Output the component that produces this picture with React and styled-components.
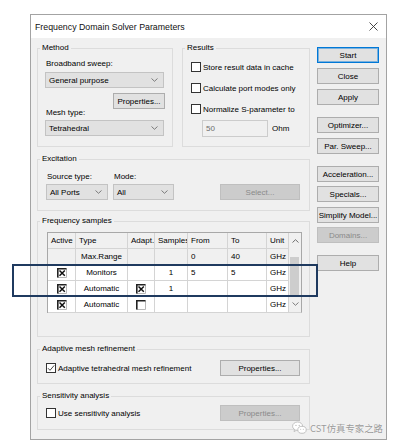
import React from "react";
import styled, { createGlobalStyle } from "styled-components";

const GlobalStyle = createGlobalStyle`
  html, body {
    margin: 0;
    padding: 0;
    background: #ffffff;
  }
  body {
    font-family: "Liberation Sans", Arial, sans-serif;
    font-size: 8px;
    color: #000;
  }
  * { box-sizing: border-box; }
`;

const Chevron = () => (
  <svg width="7" height="4" viewBox="0 0 7 4">
    <polyline points="0.5,0.5 3.5,3.3 6.5,0.5" fill="none" stroke="#707070" strokeWidth="0.9" />
  </svg>
);

const XBox = ({ checked }) => (
  <svg width="10" height="10" viewBox="0 0 10 10">
    <path d="M9.5 0.5 V9.5 H0.5" fill="none" stroke="#b8b8b8" strokeWidth="1" />
    <path d="M0.8 9.5 V0.8 H9.5" fill="none" stroke="#222" strokeWidth="1.6" />
    {checked && (
      <path d="M2.5 2.5 L7.8 7.8 M7.8 2.5 L2.5 7.8" stroke="#111" strokeWidth="1.5" />
    )}
  </svg>
);

const Tick = () => (
  <svg width="8" height="8" viewBox="0 0 8 8">
    <polyline points="1,4.2 3,6.3 7.2,1.4" fill="none" stroke="#333" strokeWidth="0.9" />
  </svg>
);

const WeChat = () => (
  <svg width="15" height="14" viewBox="0 0 15 14">
    <ellipse cx="5.6" cy="5.2" rx="5" ry="4.2" fill="#fff" stroke="#b5b5b5" strokeWidth="0.8" />
    <path d="M2.6 8.4 L2 10.6 L4.6 9.2" fill="#fff" stroke="#b5b5b5" strokeWidth="0.8" />
    <ellipse cx="10" cy="8.8" rx="4.2" ry="3.5" fill="#fff" stroke="#b5b5b5" strokeWidth="0.8" />
    <circle cx="4" cy="4.4" r="0.6" fill="#b5b5b5" />
    <circle cx="7.2" cy="4.4" r="0.6" fill="#b5b5b5" />
    <circle cx="8.7" cy="8.3" r="0.5" fill="#b5b5b5" />
    <circle cx="11.3" cy="8.3" r="0.5" fill="#b5b5b5" />
  </svg>
);

const columns = [28, 52, 27, 33, 40, 39, 22];

const rows = [
  { head: true, cells: ["Active", "Type", "Adapt.", "Samples", "From", "To", "Unit"] },
  { grey: true, cells: ["", "Max.Range", "", "", "0", "40", "GHz"] },
  { cells: [<XBox checked />, "Monitors", "", "1", "5", "5", "GHz"] },
  { cells: [<XBox checked />, "Automatic", <XBox checked />, "1", "", "", "GHz"] },
  { cells: [<XBox checked />, "Automatic", <XBox />, "", "", "", "GHz"] },
];

const centered = [true, true, true, true, false, false, false];

const App = () => {
  return (
    <Page>
      <GlobalStyle />
      <Dialog>
        <TitleBar>
          <Title>Frequency Domain Solver Parameters</Title>
          <CloseX>
            <svg width="9" height="9" viewBox="0 0 9 9">
              <path d="M0.5 0.5 L8.5 8.5 M8.5 0.5 L0.5 8.5" stroke="#333" strokeWidth="0.9" />
            </svg>
          </CloseX>
        </TitleBar>
        <Body>
          <LeftCol>
            <TopRow>
              <Group $w={136} $h={104}>
                <Legend>Method</Legend>
                <Stack>
                  <Caption $mt={6}>Broadband sweep:</Caption>
                  <Dropdown $w={119} $mt={3}>
                    General purpose <Chevron />
                  </Dropdown>
                  <Button $w={52} $mt={5} $right>Properties...</Button>
                  <Caption $mt={-1}>Mesh type:</Caption>
                  <Dropdown $w={119} $mt={2}>
                    Tetrahedral <Chevron />
                  </Dropdown>
                </Stack>
              </Group>
              <Group $w={128} $h={104}>
                <Legend>Results</Legend>
                <Stack>
                  <CheckRow $mt={8}>
                    <CheckBox />
                    Store result data in cache
                  </CheckRow>
                  <CheckRow $mt={9}>
                    <CheckBox />
                    Calculate port modes only
                  </CheckRow>
                  <CheckRow $mt={9}>
                    <CheckBox />
                    Normalize S-parameter to
                  </CheckRow>
                  <InputRow>
                    <TextBox>50</TextBox>
                    Ohm
                  </InputRow>
                </Stack>
              </Group>
            </TopRow>

            <Group $h={57} $mt={7}>
              <Legend>Excitation</Legend>
              <FieldRow>
                <Field>
                  <Caption>Source type:</Caption>
                  <Dropdown $w={62} $mt={2}>
                    All Ports <Chevron />
                  </Dropdown>
                </Field>
                <Field>
                  <Caption>Mode:</Caption>
                  <Dropdown $w={61} $mt={2}>
                    All <Chevron />
                  </Dropdown>
                </Field>
                <Button $w={80} $disabled $push>Select...</Button>
              </FieldRow>
            </Group>

            <Group $h={121} $mt={5}>
              <Legend>Frequency samples</Legend>
              <TableFrame>
                <Grid>
                  {rows.map((row, r) =>
                    row.cells.map((c, i) => (
                      <Cell
                        key={r + "-" + i}
                        $bg={row.head || row.grey ? "#f0f0f0" : "#ffffff"}
                        $center={!row.head && centered[i]}
                      >
                        {c}
                      </Cell>
                    ))
                  )}
                </Grid>
                <ScrollBar>
                  <ScrollArrow>
                    <svg width="7" height="4" viewBox="0 0 7 4">
                      <polyline points="0.5,3.5 3.5,0.7 6.5,3.5" fill="none" stroke="#606060" strokeWidth="0.9" />
                    </svg>
                  </ScrollArrow>
                  <Thumb />
                  <ScrollArrow>
                    <Chevron />
                  </ScrollArrow>
                </ScrollBar>
              </TableFrame>
            </Group>

            <Group $h={40} $mt={7}>
              <Legend>Adaptive mesh refinement</Legend>
              <OptionRow $mt={6}>
                <CheckBox>
                  <Tick />
                </CheckBox>
                Adaptive tetrahedral mesh refinement
                <Button $w={80} $push>Properties...</Button>
              </OptionRow>
            </Group>

            <Group $h={39} $mt={7}>
              <Legend>Sensitivity analysis</Legend>
              <OptionRow $mt={4}>
                <CheckBox />
                Use sensitivity analysis
                <Button $w={80} $disabled $push>Properties...</Button>
              </OptionRow>
            </Group>
          </LeftCol>

          <ButtonCol>
            <Button $focus>Start</Button>
            <Button $mt={5}>Close</Button>
            <Button $mt={5}>Apply</Button>
            <Button $mt={12}>Optimizer...</Button>
            <Button $mt={5}>Par. Sweep...</Button>
            <Button $mt={12}>Acceleration...</Button>
            <Button $mt={4}>Specials...</Button>
            <Button $mt={5}>Simplify Model...</Button>
            <Button $mt={4} $disabled>Domains...</Button>
            <Button $mt={12}>Help</Button>
          </ButtonCol>
        </Body>

        <Watermark>
          <WeChat />
          <span>CST仿真专家之路</span>
        </Watermark>
      </Dialog>
      <Highlight />
    </Page>
  );
};

const Page = styled.div`
  position: relative;
  width: 399px;
  height: 445px;
  padding: 14px 0 0 30px;
  overflow: hidden;
`;
const Dialog = styled.div`
  position: relative;
  width: 357px;
  height: 426px;
  border: 1px solid #a3a3a3;
  background: #f0f0f0;
  display: flex;
  flex-direction: column;
  overflow: hidden;
`;
const TitleBar = styled.div`
  height: 23px;
  flex: none;
  background: #ffffff;
  display: flex;
  align-items: center;
  padding-left: 4px;
`;
const Title = styled.div`
  font-size: 8.8px;
  color: #111;
`;
const CloseX = styled.div`
  margin-left: auto;
  width: 24px;
  display: flex;
  justify-content: center;
  margin-right: 1px;
`;
const Body = styled.div`
  display: flex;
  gap: 7px;
  padding: 5px 0 0 6px;
`;
const LeftCol = styled.div`
  width: 273px;
  display: flex;
  flex-direction: column;
`;
const TopRow = styled.div`
  display: flex;
  gap: 9px;
`;
const Group = styled.fieldset`
  margin: ${(p) => p.$mt || 0}px 0 0;
  padding: 0 7px;
  border: 1px solid #dcdcdc;
  width: ${(p) => (p.$w ? p.$w + "px" : "auto")};
  height: ${(p) => p.$h}px;
  min-width: 0;
`;
const Legend = styled.legend`
  margin-left: -5px;
  padding: 0 2px;
  font-size: 8px;
  line-height: 10px;
  color: #000;
`;
const Stack = styled.div`
  display: flex;
  flex-direction: column;
`;
const Caption = styled.div`
  line-height: 10px;
  padding-left: 1px;
  margin-top: ${(p) => p.$mt || 0}px;
`;
const Dropdown = styled.div`
  width: ${(p) => p.$w}px;
  height: 16px;
  margin-top: ${(p) => p.$mt || 0}px;
  background: #e1e1e1;
  border: 1px solid #c3c3c3;
  display: flex;
  align-items: center;
  justify-content: space-between;
  padding: 0 5px 0 3px;
`;
const Button = styled.div`
  width: ${(p) => (p.$w ? p.$w + "px" : "62px")};
  height: 16px;
  flex: none;
  margin-top: ${(p) => p.$mt || 0}px;
  margin-left: ${(p) => (p.$push ? "auto" : "0")};
  margin-right: ${(p) => (p.$push ? "2px" : "0")};
  align-self: ${(p) => (p.$right ? "flex-end" : "auto")};
  background: ${(p) => (p.$disabled ? "#cccccc" : "#e1e1e1")};
  border: 1px solid ${(p) => (p.$focus ? "#0078d7" : p.$disabled ? "#bfbfbf" : "#adadad")};
  box-shadow: ${(p) => (p.$focus ? "inset 0 0 0 1px rgba(0,120,215,0.45)" : "none")};
  color: ${(p) => (p.$disabled ? "#8a8a8a" : "#000")};
  display: flex;
  align-items: center;
  justify-content: center;
  white-space: nowrap;
`;
const CheckRow = styled.div`
  display: flex;
  align-items: center;
  gap: 2px;
  height: 12px;
  margin-top: ${(p) => p.$mt || 0}px;
  padding-left: 1px;
  white-space: nowrap;
`;
const CheckBox = styled.span`
  width: 10px;
  height: 10px;
  flex: none;
  border: 1px solid #333;
  background: #fff;
  display: flex;
  align-items: center;
  justify-content: center;
`;
const InputRow = styled.div`
  display: flex;
  align-items: center;
  gap: 4px;
  margin: 5px 0 0 12px;
`;
const TextBox = styled.div`
  width: 66px;
  height: 17px;
  border: 1px solid #cccccc;
  background: #f0f0f0;
  color: #6d6d6d;
  display: flex;
  align-items: center;
  padding-left: 3px;
`;
const FieldRow = styled.div`
  display: flex;
  align-items: flex-end;
  gap: 5px;
  margin: 8px 0 0 1px;
`;
const Field = styled.div`
  display: flex;
  flex-direction: column;
`;
const TableFrame = styled.div`
  display: flex;
  margin: 6px 0 0 2px;
`;
const Grid = styled.div`
  display: grid;
  grid-template-columns: ${columns.map((w) => w + "px").join(" ")};
  grid-auto-rows: 16px;
  border-left: 1px solid #a8a8a8;
  border-top: 1px solid #a8a8a8;
  border-bottom: 0;
`;
const Cell = styled.div`
  background: ${(p) => p.$bg};
  border-right: 1px solid #d4d4d4;
  border-bottom: 1px solid #d4d4d4;
  display: flex;
  align-items: center;
  justify-content: ${(p) => (p.$center ? "center" : "flex-start")};
  padding-left: ${(p) => (p.$center ? 0 : 3)}px;
  white-space: nowrap;
  overflow: hidden;
`;
const ScrollBar = styled.div`
  width: 13px;
  height: 81px;
  background: #f0f0f0;
  border-top: 1px solid #a8a8a8;
  border-right: 1px solid #a8a8a8;
  border-bottom: 1px solid #d4d4d4;
  display: flex;
  flex-direction: column;
`;
const ScrollArrow = styled.div`
  height: 16px;
  display: flex;
  align-items: center;
  justify-content: center;
`;
const Thumb = styled.div`
  height: 40px;
  margin: 8px 2px 0 1px;
  background: #cdcdcd;
`;
const OptionRow = styled.div`
  display: flex;
  align-items: center;
  gap: 2px;
  margin: ${(p) => p.$mt || 0}px 0 0 1px;
  white-space: nowrap;
`;
const ButtonCol = styled.div`
  width: 62px;
  padding-top: 4px;
  display: flex;
  flex-direction: column;
`;
const Watermark = styled.div`
  position: absolute;
  left: 261px;
  top: 406px;
  display: flex;
  align-items: center;
  gap: 3px;
  font-family: "Noto Sans CJK SC", sans-serif;
  font-size: 9.4px;
  color: #9a9a9a;
  text-shadow: 0 0 1px #fff;
  white-space: nowrap;
`;
const Highlight = styled.div`
  position: absolute;
  left: 12px;
  top: 264px;
  width: 306px;
  height: 33px;
  border: 2px solid #1f3a5f;
  pointer-events: none;
`;

export default App;
